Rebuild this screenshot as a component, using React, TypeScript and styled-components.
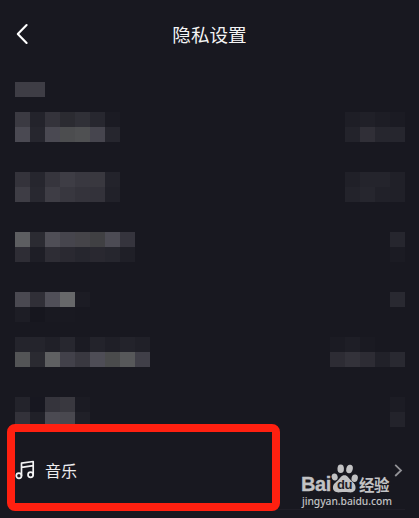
import React from 'react';
import styled, { createGlobalStyle } from 'styled-components';

const GlobalStyle = createGlobalStyle`
  * { box-sizing: border-box; }
  body { margin: 0; background: #181820; }
`;

const Screen = styled.main`
  position: relative;
  display: flex;
  flex-direction: column;
  width: 419px;
  height: 518px;
  overflow: hidden;
  background: #181820;
  color: #f4f4f5;
  font-family: 'Noto Sans CJK SC', sans-serif;
`;

const Header = styled.header`
  display: grid;
  grid-template-columns: 44px 1fr 44px;
  align-items: center;
  height: 68px;
`;

const BackButton = styled.button`
  display: flex;
  padding: 0 0 0 14px;
  border: 0;
  background: none;
  color: #fff;
`;

const Title = styled.h1`
  margin: 0;
  font-size: 18.6px;
  line-height: 28px;
  font-weight: 400;
  text-align: center;
`;

const List = styled.section`
  display: flex;
  flex-direction: column;
  padding: 14px 14px 0 15px;
  height: 359px;
`;

const MaskedRow = styled.div<{ $gap: number }>`
  display: flex;
  justify-content: space-between;
  margin-bottom: ${(p) => p.$gap}px;
`;

const Mosaic = styled.div<{ $columns: number }>`
  display: grid;
  grid-template-columns: repeat(${(p) => p.$columns}, 15px);
  grid-auto-rows: 15px;
`;

const Cell = styled.span<{ $color: string }>`
  background: ${(p) => p.$color};
`;

const MusicRow = styled.div`
  display: flex;
  align-items: center;
  height: 80px;
  margin: 3px 14px 0 15px;
  border-bottom: 1px solid #1f1e27;
`;

const MusicLabel = styled.span`
  flex: 1;
  margin-left: 10px;
  font-size: 16px;
  line-height: 24px;
  color: #ececee;
`;

const Highlight = styled.div`
  position: absolute;
  left: 7px;
  top: 424px;
  width: 273px;
  height: 87px;
  border: 8px solid #ff2010;
  border-radius: 8px;
`;

const Watermark = styled.div`
  position: absolute;
  left: 302px;
  top: 464px;
  width: 90px;
  color: #c2c2c4;
`;

const Brand = styled.div`
  display: flex;
  align-items: flex-end;
  height: 29px;
`;

const Latin = styled.span`
  width: 30px;
  height: 19px;
  margin-left: -1px;
  font: 700 20px/20px 'Liberation Sans', sans-serif;
  letter-spacing: -0.4px;
  -webkit-text-stroke: 0.3px currentColor;
`;

const PawMark = styled.div`
  position: relative;
  width: 28px;
  height: 29px;
`;

const Du = styled.span`
  position: absolute;
  left: 5px;
  top: 14px;
  width: 17px;
  text-align: center;
  font: 700 13px/14px 'Liberation Sans', sans-serif;
  letter-spacing: -0.5px;
  color: #202028;
`;

const Chinese = styled.span`
  height: 18px;
  font: 700 15.5px/18px 'Noto Sans CJK SC', sans-serif;
  letter-spacing: -0.5px;
  white-space: nowrap;
`;

const Address = styled.div`
  margin-top: 1px;
  font: 500 10.3px/15px 'Noto Sans', sans-serif;
  letter-spacing: -0.05px;
  white-space: nowrap;
`;

type MaskedItem = { left: string[][]; right: string[][]; gap: number };

const items: MaskedItem[] = [
  { left: [['#3e3d45', '#3e3d45']], right: [], gap: 15 },
  {
    left: [
      ['#3b3a42', '#23232b', '#34333b', '#2b2b31', '#303037', '#27272f', '#1b1b23'],
      ['#4a4952', '#26262e', '#4a4952', '#4c4d4f', '#4f5052', '#46454e', '#26262e'],
    ],
    right: [
      ['#1e1e26', '#202028', '#1d1d25', '#1b1b23'],
      ['#23232b', '#302f37', '#26262e', '#26262e'],
    ],
    gap: 30,
  },
  {
    left: [
      ['#34333b', '#26262e', '#36353d', '#3e3d45', '#393840', '#39383f', '#23232b'],
      ['#3e3d45', '#282830', '#3e3d45', '#38373f', '#34333b', '#33323a', '#212129'],
    ],
    right: [
      ['#202028', '#24242c', '#24242c', '#202028'],
      ['#23232b', '#26262e', '#212129', '#202028'],
    ],
    gap: 30,
  },
  {
    left: [
      ['#5d5e61', '#2b2b32', '#4f4e56', '#46454d', '#454449', '#404043', '#4c4b54', '#35343d'],
      ['#2e2d35', '#1e1e26', '#2e2d35', '#2a2931', '#26262e', '#292830', '#26262e', '#1f1f27'],
    ],
    right: [['#26262e'], ['#1b1b23']],
    gap: 30,
  },
  {
    left: [
      ['#4a4951', '#302f37', '#504f58', '#67686a', '#1c1c24'],
      ['#1d1d25', '#16161e', '#191921', '#191921', '#181820'],
    ],
    right: [['#292931'], ['#181820']],
    gap: 15,
  },
  {
    left: [
      ['#24242c', '#24242c', '#202028', '#27272f', '#1b1b23', '#23232b', '#1f1f27', '#23232b', '#202028'],
      ['#535456', '#2a2a31', '#5f6062', '#42414a', '#393840', '#4e4d56', '#4a4b4c', '#57585a', '#403f48'],
    ],
    right: [
      ['#1b1b23', '#1e1e26', '#1a1a22', '#181820', '#181820'],
      ['#2d2c34', '#33323a', '#2d2c34', '#212129', '#292931'],
    ],
    gap: 30,
  },
  {
    left: [
      ['#23232b', '#171720', '#35343c', '#39383f', '#1b1b23'],
      ['#33323a', '#202028', '#4b4a52', '#49484f', '#202028'],
    ],
    right: [['#1c1c24'], ['#23232b']],
    gap: 0,
  },
];

const MosaicBlock = ({ rows }: { rows: string[][] }) => (
  <Mosaic $columns={rows[0]?.length ?? 1}>
    {rows.flat().map((color, i) => (
      <Cell key={i} $color={color} />
    ))}
  </Mosaic>
);

const BackIcon = () => (
  <svg width="18" height="24" viewBox="0 0 18 24" fill="none" stroke="currentColor" strokeWidth="2.1" strokeLinecap="round" strokeLinejoin="round">
    <path d="M12.6 3 L3.8 12 L12.6 21" />
  </svg>
);

const MusicIcon = () => (
  <svg width="20" height="20" viewBox="0 0 20 20" fill="none" stroke="#f4f4f5" strokeWidth="1.7" strokeLinecap="round" strokeLinejoin="round">
    <path d="M6.5 15.5V3.2L18.2 1.5V14.5M6.5 7.3L18.2 5.6" />
    <circle cx="3.9" cy="15.8" r="2.6" />
    <circle cx="15.6" cy="14.8" r="2.6" />
  </svg>
);

const ForwardIcon = () => (
  <svg width="12" height="16" viewBox="0 0 12 16" fill="none" stroke="#929297" strokeWidth="1.8">
    <path d="M2.2 2.8L8 8.4L2.2 14" />
  </svg>
);

const Paw = () => (
  <svg width="28" height="29" viewBox="0 0 26 29" preserveAspectRatio="none" fill="currentColor">
    <ellipse cx="3.4" cy="13" rx="2.8" ry="3.6" transform="rotate(-12 3.4 13)" />
    <ellipse cx="9" cy="4.7" rx="3" ry="4.3" />
    <ellipse cx="17.2" cy="5" rx="3" ry="4.3" transform="rotate(12 17.2 5)" />
    <ellipse cx="22" cy="14.2" rx="2.9" ry="3.8" transform="rotate(12 22 14.2)" />
    <path d="M12.5 11.2C15.3 11.2 16.4 14 18.2 16.1C20.2 18.3 22.9 20.1 22.8 24C22.7 27.6 20 28.7 16.5 28.3C13.8 28 11.5 28 8.6 28.3C5 28.8 1.8 27.4 1.8 23.5C1.8 20 4.8 18.3 6.7 16.1C8.5 14 9.5 11.2 12.5 11.2Z" />
  </svg>
);

export default function App() {
  return (
    <>
      <GlobalStyle />
      <Screen>
        <Header>
          <BackButton aria-label="返回">
            <BackIcon />
          </BackButton>
          <Title>隐私设置</Title>
        </Header>
        <List>
          {items.map((item, i) => (
            <MaskedRow key={i} $gap={item.gap}>
              <MosaicBlock rows={item.left} />
              {item.right.length > 0 && <MosaicBlock rows={item.right} />}
            </MaskedRow>
          ))}
        </List>
        <MusicRow>
          <MusicIcon />
          <MusicLabel>音乐</MusicLabel>
          <ForwardIcon />
        </MusicRow>
        <Highlight />
        <Watermark>
          <Brand>
            <Latin>Bai</Latin>
            <PawMark>
              <Paw />
              <Du>du</Du>
            </PawMark>
            <Chinese>经验</Chinese>
          </Brand>
          <Address>jingyan.baidu.com</Address>
        </Watermark>
      </Screen>
    </>
  );
}
